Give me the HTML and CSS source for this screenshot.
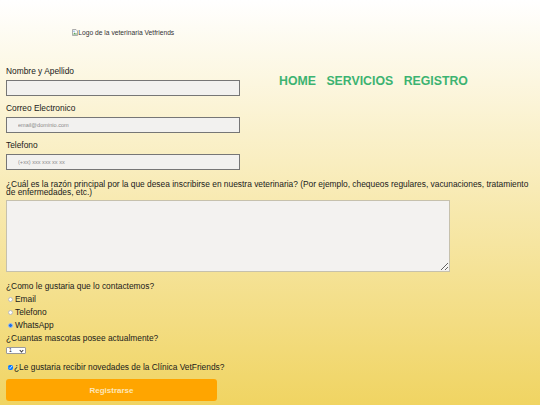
FILE: index.html
```html
<!DOCTYPE html>
<html lang="es">
<head>
<meta charset="utf-8">
<title>Registro VetFriends</title>
<link rel="stylesheet" href="styles.css">
</head>
<body>
<div class="page">
  <div class="top">
    <div class="left">
      <div class="logo">
        <svg class="broken" width="6" height="7" viewBox="0 0 6 7" aria-hidden="true">
          <path d="M0.5 0.5 H4 L5.5 2 V6.5 H0.5 Z" fill="#fafafa" stroke="#9a9a9a" stroke-width="0.8"/>
          <path d="M1 5.5 L2.5 3.5 L3.5 4.8 L4.2 4 L5 5.5 Z" fill="#5aa05a"/>
          <circle cx="2" cy="2.2" r="0.7" fill="#6aa0e0"/>
        </svg><span>Logo de la veterinaria Vetfriends</span>
      </div>
      <div class="field">
        <label class="lbl" for="nombre">Nombre y Apellido</label>
        <input class="txt" id="nombre" type="text">
      </div>
      <div class="field">
        <label class="lbl" for="correo">Correo Electronico</label>
        <input class="txt" id="correo" type="email" placeholder="email@dominio.com">
      </div>
      <div class="field">
        <label class="lbl" for="tel">Telefono</label>
        <input class="txt" id="tel" type="tel" placeholder="(+xx) xxx xxx xx xx">
      </div>
    </div>
    <nav class="nav">
      <a href="#">HOME</a>
      <a href="#">SERVICIOS</a>
      <a href="#">REGISTRO</a>
    </nav>
  </div>
  <label class="long" for="razon">¿Cuál es la razón principal por la que desea inscribirse en nuestra veterinaria? (Por ejemplo, chequeos regulares, vacunaciones, tratamiento de enfermedades, etc.)</label>
  <textarea class="area" id="razon"></textarea>
  <div class="row q">¿Como le gustaria que lo contactemos?</div>
  <label class="row opt"><input class="radio" type="radio" name="c">Email</label>
  <label class="row opt"><input class="radio" type="radio" name="c">Telefono</label>
  <label class="row opt"><input class="radio" type="radio" name="c" checked>WhatsApp</label>
  <div class="row">¿Cuantas mascotas posee actualmente?</div>
  <div class="selrow">
    <span class="selwrap">
      <select class="sel"><option>1</option><option>2</option><option>3</option></select>
    </span>
  </div>
  <label class="chk"><input class="box" type="checkbox" checked>¿Le gustaria recibir novedades de la Clínica VetFriends?</label>
  <button class="btn" type="button">Registrarse</button>
</div>
</body>
</html>
```
FILE: styles.css
```css
html, body {
  margin: 0;
  padding: 0;
}
body {
  min-height: 405px;
  background: linear-gradient(to bottom, #ffffff 0%, #f0d462 100%);
  font-family: "Liberation Sans", Arial, sans-serif;
  font-size: 8.4px;
  color: #1a1a1a;
}
.page {
  padding: 0 6px;
}
.top {
  display: flex;
  align-items: flex-start;
}
.left {
  width: 234px;
}
.logo {
  margin-top: 28px;
  height: 8px;
  display: flex;
  align-items: center;
  justify-content: center;
  font-size: 6.7px;
  color: #333;
  margin-bottom: 31px;
}
.broken {
  display: block;
  margin-right: 0.5px;
}
.field {
  margin-bottom: 8px;
}
.lbl {
  display: block;
  line-height: 8px;
  margin-bottom: 5px;
}
.txt {
  display: block;
  box-sizing: border-box;
  width: 234px;
  height: 16px;
  margin: 0;
  padding: 0 11px;
  border: 1px solid #767676;
  background: #f2f1ef;
  font-family: "Liberation Sans", Arial, sans-serif;
  font-size: 5.6px;
  outline: none;
}
.txt::placeholder {
  color: #8a8a8a;
}
.nav {
  margin-left: 39px;
  margin-top: 74px;
  display: flex;
  gap: 10.5px;
}
.nav a {
  color: #3cb371;
  font-weight: bold;
  font-size: 12.3px;
  text-decoration: none;
  line-height: 14px;
}
.long {
  display: block;
  margin-top: 3px;
  line-height: 7.5px;
}
.area {
  display: block;
  box-sizing: border-box;
  width: 444px;
  height: 72px;
  margin: 4px 0 0;
  border: 1px solid #c6c1ad;
  background: #f3f2f0;
  resize: both;
}
.row {
  display: flex;
  align-items: center;
  height: 13px;
}
.q {
  margin-top: 7.5px;
}
.opt {
  padding-left: 2px;
}
.radio {
  appearance: none;
  -webkit-appearance: none;
  box-sizing: border-box;
  width: 5px;
  height: 5px;
  margin: 0 2px 0 0;
  border-radius: 50%;
  border: 0.8px solid #bdbdbd;
  background: #ffffff;
}
.radio:checked {
  background: #1f6fe0;
  border-color: #9cbcf0;
}
.selrow {
  margin-top: 2.5px;
  height: 7px;
}
.selwrap {
  position: relative;
  display: block;
  width: 20px;
  height: 7px;
}
.selwrap::after {
  content: "";
  position: absolute;
  right: 3px;
  top: 1.6px;
  width: 2px;
  height: 2px;
  border-right: 0.8px solid #333;
  border-bottom: 0.8px solid #333;
  transform: rotate(45deg);
  pointer-events: none;
}
.sel {
  appearance: none;
  -webkit-appearance: none;
  display: block;
  box-sizing: border-box;
  width: 20px;
  height: 7px;
  margin: 0;
  padding: 0 0 0 2px;
  font-family: "Liberation Sans", Arial, sans-serif;
  font-size: 5px;
  line-height: 5px;
  color: #222;
  border: 0.6px solid #9a9a9a;
  border-radius: 1px;
  background: #ffffff;
}
.chk {
  display: flex;
  align-items: center;
  height: 10px;
  margin-top: 8px;
  padding-left: 2px;
}
.box {
  width: 5px;
  height: 5px;
  margin: 0 1px 0 0;
}
.btn {
  display: block;
  width: 211px;
  height: 22px;
  margin-top: 7px;
  border: none;
  border-radius: 3px;
  background: #ffa500;
  color: #fde7ba;
  font-family: "Liberation Sans", Arial, sans-serif;
  font-weight: bold;
  font-size: 8px;
}
```
